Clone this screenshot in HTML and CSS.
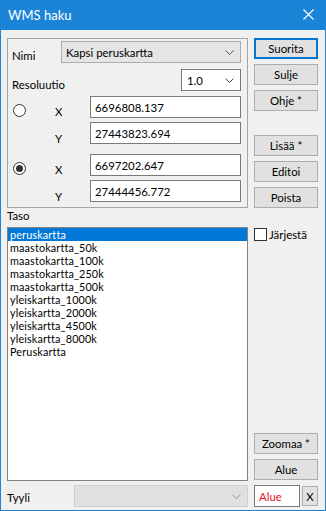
FILE: index.html
```html
<!DOCTYPE html>
<html>
<head>
<meta charset="utf-8">
<link rel="stylesheet" href="styles.css">
</head>
<body>
<div class="win">
  <div class="titlebar">
    <span class="title">WMS haku</span>
    <svg class="close" width="11" height="11" viewBox="0 0 11 11"><path d="M0.5 0.5 L10.5 10.5 M10.5 0.5 L0.5 10.5" stroke="#fff" stroke-width="1.1" fill="none"/></svg>
  </div>
  <div class="client">
    <div class="top">
      <div class="group">
        <div class="row-name">
          <span class="lbl">Nimi</span>
          <div class="combo combo-gray name-combo"><span>Kapsi peruskartta</span><svg class="chev" width="9" height="5" viewBox="0 0 9 5"><polyline points="0.5,0.5 4.5,4.5 8.5,0.5" fill="none" stroke="#555" stroke-width="1"/></svg></div>
        </div>
        <div class="row-res">
          <span class="lbl">Resoluutio</span>
          <div class="combo combo-white res-combo"><span>1.0</span><svg class="chev" width="9" height="5" viewBox="0 0 9 5"><polyline points="0.5,0.5 4.5,4.5 8.5,0.5" fill="none" stroke="#444" stroke-width="1"/></svg></div>
        </div>
        <div class="coord first">
          <span class="radio"></span>
          <span class="axis ax-x">X</span>
          <div class="input">6696808.137</div>
          <span class="axis ax-y">Y</span>
          <div class="input">27443823.694</div>
        </div>
        <div class="coord second">
          <span class="radio checked"></span>
          <span class="axis ax-x">X</span>
          <div class="input">6697202.647</div>
          <span class="axis ax-y">Y</span>
          <div class="input">27444456.772</div>
        </div>
      </div>
      <div class="btncol">
        <div class="btn default">Suorita</div>
        <div class="btn">Sulje</div>
        <div class="btn">Ohje *</div>
        <div class="btn lisaa">Lisää *</div>
        <div class="btn">Editoi</div>
        <div class="btn">Poista</div>
      </div>
    </div>
    <div class="middle">
      <div class="listwrap">
        <div class="taso">Taso</div>
        <div class="list">
          <div class="item sel">peruskartta</div>
          <div class="item">maastokartta_50k</div>
          <div class="item">maastokartta_100k</div>
          <div class="item">maastokartta_250k</div>
          <div class="item">maastokartta_500k</div>
          <div class="item">yleiskartta_1000k</div>
          <div class="item">yleiskartta_2000k</div>
          <div class="item">yleiskartta_4500k</div>
          <div class="item">yleiskartta_8000k</div>
          <div class="item">Peruskartta</div>
        </div>
      </div>
      <div class="sidecol">
        <label class="check"><span class="box"></span><span>Järjestä</span></label>
        <div class="spacer"></div>
        <div class="btn">Zoomaa *</div>
        <div class="btn">Alue</div>
      </div>
    </div>
    <div class="bottom">
      <div class="tyyli-wrap">
        <span class="lbl tyyli">Tyyli</span>
        <div class="combo combo-disabled tyyli-combo"><span></span><svg class="chev" width="9" height="5" viewBox="0 0 9 5"><polyline points="0.5,0.5 4.5,4.5 8.5,0.5" fill="none" stroke="#9a9a9a" stroke-width="1"/></svg></div>
      </div>
      <div class="alue-wrap">
        <div class="alue-input">Alue</div>
        <div class="xbtn">X</div>
      </div>
    </div>
  </div>
</div>
</body>
</html>
```
FILE: styles.css
```css
* { box-sizing: border-box; }
html, body { margin: 0; padding: 0; }
body {
  width: 326px;
  height: 511px;
  font-family: "Lato", "Noto Sans", sans-serif;
  font-size: 11.4px;
  color: #000;
  background: #fff;
}
.win {
  width: 326px;
  height: 511px;
  border: 1px solid #1a84d6;
  border-top: none;
  display: flex;
  flex-direction: column;
  background: #f0f0f0;
}
.titlebar {
  height: 30px;
  margin: 0 -1px;
  background: #1a84d6;
  display: flex;
  align-items: center;
  justify-content: space-between;
  padding: 0 12px 1px 8px;
  flex: none;
}
.title { color: #fff; font-size: 13px; }
.close { display: block; }
.client {
  flex: 1;
  display: flex;
  flex-direction: column;
  padding: 8px 6px 2px 6px;
}
.top { display: flex; gap: 6px; height: 170px; }
.group {
  width: 241px;
  height: 170px;
  border: 1px solid #a6a6a6;
  padding: 2px 6px 0 4px;
}
.row-name { display: flex; align-items: flex-start; height: 22px; }
.row-name .lbl { width: 49px; padding-top: 8px; }
.combo {
  height: 22px;
  display: flex;
  align-items: center;
  justify-content: space-between;
  padding: 0 6px 0 4px;
}
.combo-gray { background: #e5e5e5; border: 1px solid #acacac; }
.combo-white { background: #fff; border: 1px solid #7a7a7a; }
.combo-disabled { background: #e0e0e0; border: 1px solid #cfcfcf; }
.name-combo { width: 180px; }
.row-res { display: flex; align-items: flex-start; justify-content: space-between; height: 22px; margin-top: 6px; }
.row-res .lbl { padding-top: 9px; }
.res-combo { width: 60px; padding-left: 5px; }
.chev { display: block; }
.coord {
  display: grid;
  grid-template-columns: 41px 36px 151px;
  grid-template-rows: 22px 22px;
  row-gap: 4px;
  padding-left: 1px;
}
.coord.first { margin-top: 5px; }
.coord.second { margin-top: 10px; }
.radio {
  grid-row: 1 / span 2;
  grid-column: 1;
  width: 13px;
  height: 13px;
  border: 1px solid #333;
  border-radius: 50%;
  background: #fff;
  margin-top: 8px;
  position: relative;
}
.radio.checked::after {
  content: "";
  position: absolute;
  left: 2px; top: 2px;
  width: 7px; height: 7px;
  border-radius: 50%;
  background: #333;
}
.axis { grid-column: 2; padding-top: 9px; padding-left: 1px; line-height: 14px; }
.ax-x { grid-row: 1; }
.ax-y { grid-row: 2; padding-top: 10px; }
.input {
  grid-column: 3;
  height: 22px;
  background: #fff;
  border: 1px solid #7a7a7a;
  padding: 0 4px;
  display: flex;
  align-items: center;
}
.btncol { display: flex; flex-direction: column; width: 64px; gap: 5px; }
.btn {
  height: 21px;
  width: 64px;
  background: #e1e1e1;
  border: 1px solid #adadad;
  display: flex;
  align-items: center;
  justify-content: center;
  flex: none;
}
.btn.default { border: 2px solid #0078d7; }
.btn.lisaa { margin-top: 19px; }
.middle { display: flex; gap: 6px; height: 273px; }
.listwrap { width: 241px; display: flex; flex-direction: column; }
.taso { height: 19px; padding-top: 1px; }
.list {
  flex: 1;
  background: #fff;
  border: 1px solid #828282;
  padding: 0;
}
.item { height: 13px; line-height: 13px; font-size: 10.8px; padding-left: 2px; white-space: nowrap; letter-spacing: 0.15px; }
.item.sel { background: #0078d7; color: #fff; }
.sidecol { width: 64px; display: flex; flex-direction: column; gap: 5px; padding-top: 20px; padding-bottom: 1px; }
.spacer { flex: 1; }
.check { display: flex; align-items: center; gap: 2px; height: 13px; }
.box { width: 13px; height: 13px; border: 1px solid #333; background: #fff; display: block; flex: none; }
.bottom { display: flex; gap: 6px; margin-top: 4px; height: 22px; }
.tyyli-wrap { width: 241px; display: flex; justify-content: space-between; align-items: flex-start; }
.tyyli { padding-top: 6px; }
.tyyli-combo { width: 174px; }
.alue-wrap { width: 64px; display: flex; gap: 2px; }
.alue-input {
  width: 46px;
  height: 22px;
  background: #fff;
  border: 1px solid #7a7a7a;
  color: #e81123;
  padding: 0 4px;
  display: flex;
  align-items: center;
}
.xbtn {
  width: 16px;
  height: 20px;
  margin-top: 1px;
  background: #e1e1e1;
  border: 1px solid #adadad;
  display: flex;
  align-items: center;
  justify-content: center;
}
```
